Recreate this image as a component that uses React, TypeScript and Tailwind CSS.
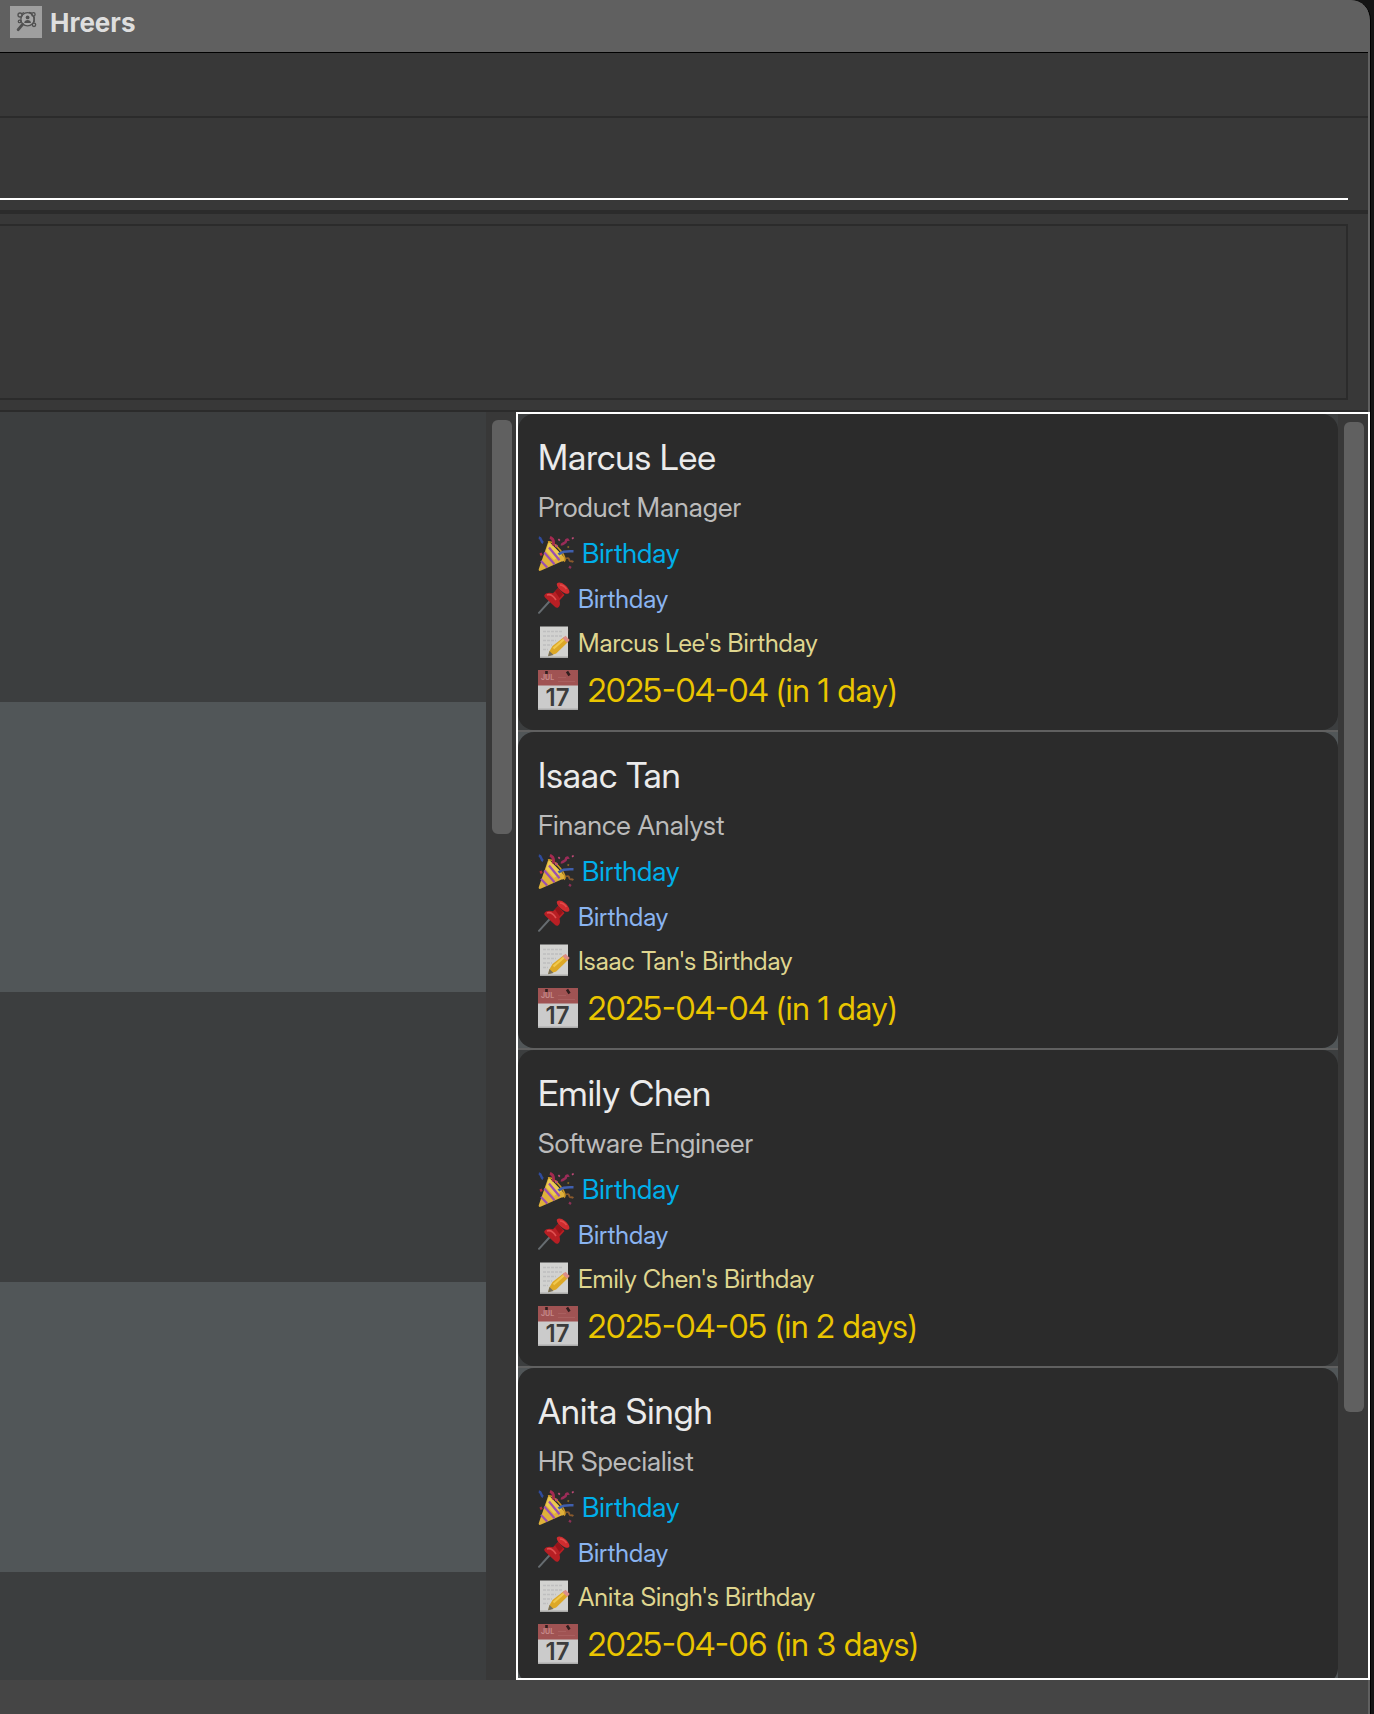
import React from "react";

type EventEntry = {
  name: string;
  role: string;
  note: string;
  date: string;
};

const EVENTS: EventEntry[] = [
  { name: "Marcus Lee", role: "Product Manager", note: "Marcus Lee's Birthday", date: "2025-04-04 (in 1 day)" },
  { name: "Isaac Tan", role: "Finance Analyst", note: "Isaac Tan's Birthday", date: "2025-04-04 (in 1 day)" },
  { name: "Emily Chen", role: "Software Engineer", note: "Emily Chen's Birthday", date: "2025-04-05 (in 2 days)" },
  { name: "Anita Singh", role: "HR Specialist", note: "Anita Singh's Birthday", date: "2025-04-06 (in 3 days)" },
];

function AppIcon() {
  return (
    <svg className="size-8 shrink-0" viewBox="0 0 32 32" fill="none" aria-hidden="true">
      <rect width="32" height="32" fill="#9f9f9f" />
      <g stroke="#505050" strokeWidth="1.3">
        <circle cx="17.5" cy="13.3" r="6.6" fill="#a8a8a8" />
        <circle cx="10" cy="9" r="2" />
        <circle cx="23.4" cy="8.4" r="1.7" />
        <circle cx="24" cy="18.8" r="1.7" />
        <circle cx="9.6" cy="15.4" r="1.3" />
        <path d="M12 7.5l2-.9M19 6.3l3 .8M24.2 10.5v6" />
      </g>
      <path d="M12.6 18.4L8.2 23.6" stroke="#505050" strokeWidth="3" strokeLinecap="round" />
      <circle cx="17.6" cy="11.4" r="1.9" fill="#505050" />
      <path d="M14.2 17c.3-2 1.600-2.900 3.400-2.900s3.100.9 3.400 2.900z" fill="#505050" />
    </svg>
  );
}

function PartyIcon() {
  return (
    <svg className="size-9 shrink-0" viewBox="0 0 36 36" fill="none" aria-hidden="true">
      <path d="M10.500 5L27 22c1 2-1 3.500-3.500 3.600L2.500 34.800C1 35.200.4 34.300.8 33z" fill="#dfb13a" />
      <path d="M11 6l13 13-8 5-8-9z" fill="#efcf58" opacity=".8" />
      <path d="M10 6c3-1 8 3 12.500 8.500S28 24 26 25.500" stroke="#c99524" strokeWidth="1.600" />
      <path d="M6.300 16.500l10.200 11.800M3 25l6.200 6.500M11 11.500l10.500 12.800" stroke="#9a4fb0" strokeWidth="2.200" />
      <path d="M20.500 18.500c3-3 6-3.500 15-3.200" stroke="#3f5fae" strokeWidth="2.600" />
      <path d="M12 1.200c3.500 1.500 4.200 4.300 3.200 8.300" stroke="#a52a50" strokeWidth="2.800" />
      <path d="M.8 1.500c3.300.5 1.400 4 4.400 5.300" stroke="#2f4b9c" strokeWidth="2.600" />
      <path d="M24 9.500c-.5-3 4-1.500 4-4.500 0-1.800 2.500-1.200 3-1.600" stroke="#9b2c58" strokeWidth="2.600" />
      <path d="M20.500 4.500l1.200-1.300M17.500 11l1.800-2M34.300 1.500l1 1.300" stroke="#c24a78" strokeWidth="2" />
      <path d="M2.500 17l1.200 2.500" stroke="#b32c36" strokeWidth="2.400" />
      <path d="M28 22.500c3-1.500 3 1 3.600 2.200 1 1.300 2-.2 3.800 1.300" stroke="#8a5a2c" strokeWidth="1.800" />
      <path d="M31 30.500l2 1.500" stroke="#8e3157" strokeWidth="2.200" />
      <path d="M29.500 10.500l1.500 1" stroke="#8a6a24" strokeWidth="1.600" />
    </svg>
  );
}

function PinIcon() {
  return (
    <svg className="size-8 shrink-0" viewBox="0 0 32 32" fill="none" aria-hidden="true">
      <path d="M1 30.800L14.500 16" stroke="#666c70" strokeWidth="2" strokeLinecap="round" />
      <path d="M6.500 13c1.500-2.300 5-3 8.500-1.700l5-5.300 6.500 7-5 5.500c1 3.500.5 6-1.700 7.200-1 .4-2 0-3.200-1.200L7.300 15.800C6.300 14.700 6 13.800 6.500 13z" fill="#b81f24" />
      <path d="M19 1.500c1.200-1.600 4.600-1.500 8 1.500s5 6 4.200 7.800c-.8 1.600-3.900 1.500-7.200-1.300-3.300-2.700-6-6-5-8z" fill="#cf2c2f" />
      <path d="M17 9.500l3-3 5 5.500-3.500 4z" fill="#961419" />
      <path d="M9 13c3-1 6.500 1 9 5" stroke="#df5050" strokeWidth="1.600" />
      <path d="M22 3c2 0 5 2 6.500 4" stroke="#e14d4b" strokeWidth="1.500" />
    </svg>
  );
}

function MemoIcon() {
  return (
    <svg className="size-8 shrink-0" viewBox="0 0 32 32" fill="none" aria-hidden="true">
      <rect x="2" y=".5" width="28" height="31.500" fill="#d2d2d0" />
      <rect x="2" y="30.500" width="28" height="1.500" fill="#aaaaa8" />
      <path d="M5 5.500h20M5 10h19M5 14.500h13M5 19h9M5 23.500h5" stroke="#bfbfbf" strokeWidth="1.500" strokeDasharray="3 1" />
      <path d="M11 26l3.500-6L26 11l4.500 4.500-12.300 12L10.500 30z" fill="#dda827" />
      <path d="M15.500 22.500L27.500 12" stroke="#f1c94d" strokeWidth="2.200" />
      <path d="M24.500 12.200l3-2.400 4.200 4.300-2.700 2.700z" fill="#dc8e88" />
      <path d="M11.500 25l4 4-5.500 1.200z" fill="#77705c" />
    </svg>
  );
}

function CalendarIcon() {
  return (
    <svg className="size-10 shrink-0 overflow-visible" viewBox="0 0 40 40" aria-hidden="true">
      <rect width="40" height="40" fill="#cbcbcb" />
      <rect width="40" height="15.500" fill="#a05353" />
      <rect y="38.500" width="40" height="1.500" fill="#ababab" />
      <path d="M8.500 1v3M29 1.500l2.500 4" stroke="#301e1e" strokeWidth="2.600" />
      <text x="3" y="10" fontFamily="Inter, sans-serif" fontSize="7" fontWeight="700" fill="#c58989">JUL</text>
      <path d="M20 11.500h17M20 7.500h8" stroke="#a95f5f" strokeWidth="1.200" />
      <text x="19.500" y="36" textAnchor="middle" fontFamily="Inter, sans-serif" fontSize="24" fontWeight="600" fill="#3c3c3c">17</text>
    </svg>
  );
}

function EventCard({ event }: { event: EventEntry }) {
  return (
    <li className="shrink-0 border-b-2 border-[#606060] bg-[#3c3e3f] even:bg-[#515658]">
      <article className="flex flex-col gap-2.5 rounded-2xl bg-[#2b2b2b] px-5 pt-[22px] pb-5">
        <h2 className="h-11 text-[35px] leading-[42px] text-[#ebebeb]">{event.name}</h2>
        <p className="h-9 text-[27px] leading-9 text-[#bbbbbb]">{event.role}</p>
        <p className="flex h-9 items-start gap-2 text-[27px] leading-9 text-[#00afea]">
          <PartyIcon />
          Birthday
        </p>
        <p className="flex h-[34px] items-start gap-2 text-[25px] leading-[34px] text-[#8ab4f0]">
          <PinIcon />
          Birthday
        </p>
        <p className="flex h-[34px] items-start gap-2 text-[25px] leading-[34px] text-[#dfd58f]">
          <MemoIcon />
          {event.note}
        </p>
        <p className="flex h-10 items-start gap-2.5 text-[32px] leading-[42px] text-[#eac500]">
          <CalendarIcon />
          {event.date}
        </p>
      </article>
    </li>
  );
}

export default function App() {
  return (
    <div className="h-screen overflow-hidden bg-[#141414] pr-[3px] font-['Inter_Display','Inter',sans-serif] [font-variation-settings:'opsz'_32]">
      <div className="flex h-full flex-col overflow-hidden rounded-tr-[20px] border-r border-black bg-[#383838]">
        <div className="flex min-h-0 flex-1 flex-col rounded-tr-[20px] border-r-2 border-[#606060]">
          <header className="flex h-[53px] shrink-0 items-start gap-2 border-b border-black bg-[#606060] pt-1.5 pl-2.5">
            <AppIcon />
            <h1 className="font-['Inter',sans-serif] text-[26px] leading-[34px] font-bold text-[#dedede] [font-variation-settings:'opsz'_14]">
              Hreers
            </h1>
          </header>

          <nav aria-label="Menu" className="h-[65px] shrink-0 border-b-2 border-[#2b2b2b]" />

          <div className="flex h-24 shrink-0 flex-col border-b-4 border-[#2b2b2b] pt-5 pr-5 pb-2.5">
            <input
              type="text"
              aria-label="Command"
              className="w-full flex-1 border-b-2 border-white bg-transparent text-2xl text-white outline-none"
            />
          </div>

          <div className="flex h-[198px] shrink-0 border-b-2 border-[#2b2b2b] py-2.5 pr-5">
            <textarea
              readOnly
              aria-label="Result"
              className="w-full resize-none border-y-2 border-r-2 border-[#2b2b2b] bg-transparent text-2xl text-white outline-none"
            />
          </div>

          <main className="flex min-h-0 flex-1">
            <section aria-label="People" className="flex w-[516px] shrink-0">
              <div className="flex flex-1 flex-col overflow-hidden">
                <div className="h-[290px] shrink-0 bg-[#3c3e3f]" />
                <div className="h-[290px] shrink-0 bg-[#515658]" />
                <div className="h-[290px] shrink-0 bg-[#3c3e3f]" />
                <div className="h-[290px] shrink-0 bg-[#515658]" />
                <div className="h-[290px] shrink-0 bg-[#3c3e3f]" />
              </div>
              <div className="w-[30px] pt-2 pl-1.5">
                <div className="h-[414px] w-5 rounded-md bg-[#606060]" />
              </div>
            </section>

            <section
              aria-label="Upcoming events"
              className="-mr-0.5 flex min-w-0 flex-1 border-2 border-white bg-[#383838]"
            >
              <ul className="flex min-w-0 flex-1 flex-col overflow-hidden">
                {EVENTS.map((event) => (
                  <EventCard key={event.name} event={event} />
                ))}
              </ul>
              <div className="w-[30px] pt-2 pl-1.5">
                <div className="h-[990px] w-5 rounded-md bg-[#606060]" />
              </div>
            </section>
          </main>

          <footer className="h-[34px] shrink-0 bg-[#454545]" />
        </div>
      </div>
    </div>
  );
}
